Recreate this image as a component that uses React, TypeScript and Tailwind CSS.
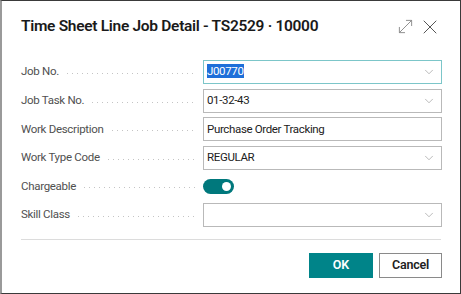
import { MoveDiagonal, X, ChevronDown } from "lucide-react";

type Row = { label: string; kind: "select" | "text" | "toggle"; value?: string; focused?: boolean };

const rows: Row[] = [
  { label: "Job No.", kind: "select", value: "J00770", focused: true },
  { label: "Job Task No.", kind: "select", value: "01-32-43" },
  { label: "Work Description", kind: "text", value: "Purchase Order Tracking" },
  { label: "Work Type Code", kind: "select", value: "REGULAR" },
  { label: "Chargeable", kind: "toggle" },
  { label: "Skill Class", kind: "select", value: "" },
];

function Field({ row }: { row: Row }) {
  if (row.kind === "toggle") {
    return (
      <div className="flex h-[24px] items-center">
        <div className="flex h-[15px] w-[31px] items-center justify-end rounded-full bg-[#00787c] pr-[3px]">
          <div className="h-[9px] w-[9px] rounded-full bg-white" />
        </div>
      </div>
    );
  }
  return (
    <div
      className={`flex h-[24px] items-center border bg-white pl-[3px] pr-[5px] ${
        row.focused ? "border-[#7cc6c9]" : "border-[#b9b9b9]"
      }`}
    >
      <div className="flex-1 text-[11.5px] tracking-[-0.35px] text-[#212121]">
        {row.focused ? <span className="bg-[#1e6fd9] text-white">{row.value}</span> : row.value}
      </div>
      {row.kind === "select" && <ChevronDown className="h-[14px] w-[14px] text-[#8a8a8a]" strokeWidth={1} />}
    </div>
  );
}

export default function App() {
  return (
    <div className="flex h-[294px] w-[461px] flex-col border border-[#3a3a3a] border-l-[2px] border-l-[#9a9a9a] bg-white font-['Roboto','Liberation_Sans',sans-serif]">
      <div className="flex h-[46px] items-center justify-between pl-[19px] pr-[18px] pt-[5px]">
        <h1 className="text-[15.5px] font-semibold tracking-[-0.3px] text-[#1a1a1a]">Time Sheet Line Job Detail - TS2529 · 10000</h1>
        <div className="flex items-center gap-[2px]">
          <MoveDiagonal className="h-[21px] w-[21px] text-[#8c8c8c]" strokeWidth={1.1} />
          <X className="h-[24px] w-[24px] text-[#555]" strokeWidth={1} />
        </div>
      </div>

      <div className="mt-[13px] flex flex-col gap-[4.6px] pl-[19px] pr-[18px]">
        {rows.map((r) => (
          <div key={r.label} className="flex items-center">
            <div className="flex w-[182px] items-center pr-[6px]">
              <span className="whitespace-nowrap text-[11.5px] tracking-[-0.3px] text-[#505050]">{r.label}</span>
              <div className="ml-[8px] mt-[3px] h-px flex-1 bg-[linear-gradient(to_right,#c4c4c4_1px,transparent_1px)] bg-[length:5px_1px] bg-repeat-x" />
            </div>
            <div className="flex-1">
              <Field row={r} />
            </div>
          </div>
        ))}
      </div>

      <div className="mx-[19px] mt-[12px] h-px bg-[#dcdcdc]" />

      <div className="mt-[13px] flex justify-end gap-[6px] pr-[18px]">
        <button className="h-[25px] w-[64px] bg-[#008489] text-[12.5px] font-semibold text-white">OK</button>
        <button className="h-[25px] w-[63px] border border-[#8a8a8a] bg-white text-[12.5px] font-semibold tracking-[-0.2px] text-[#212121]">Cancel</button>
      </div>
    </div>
  );
}
